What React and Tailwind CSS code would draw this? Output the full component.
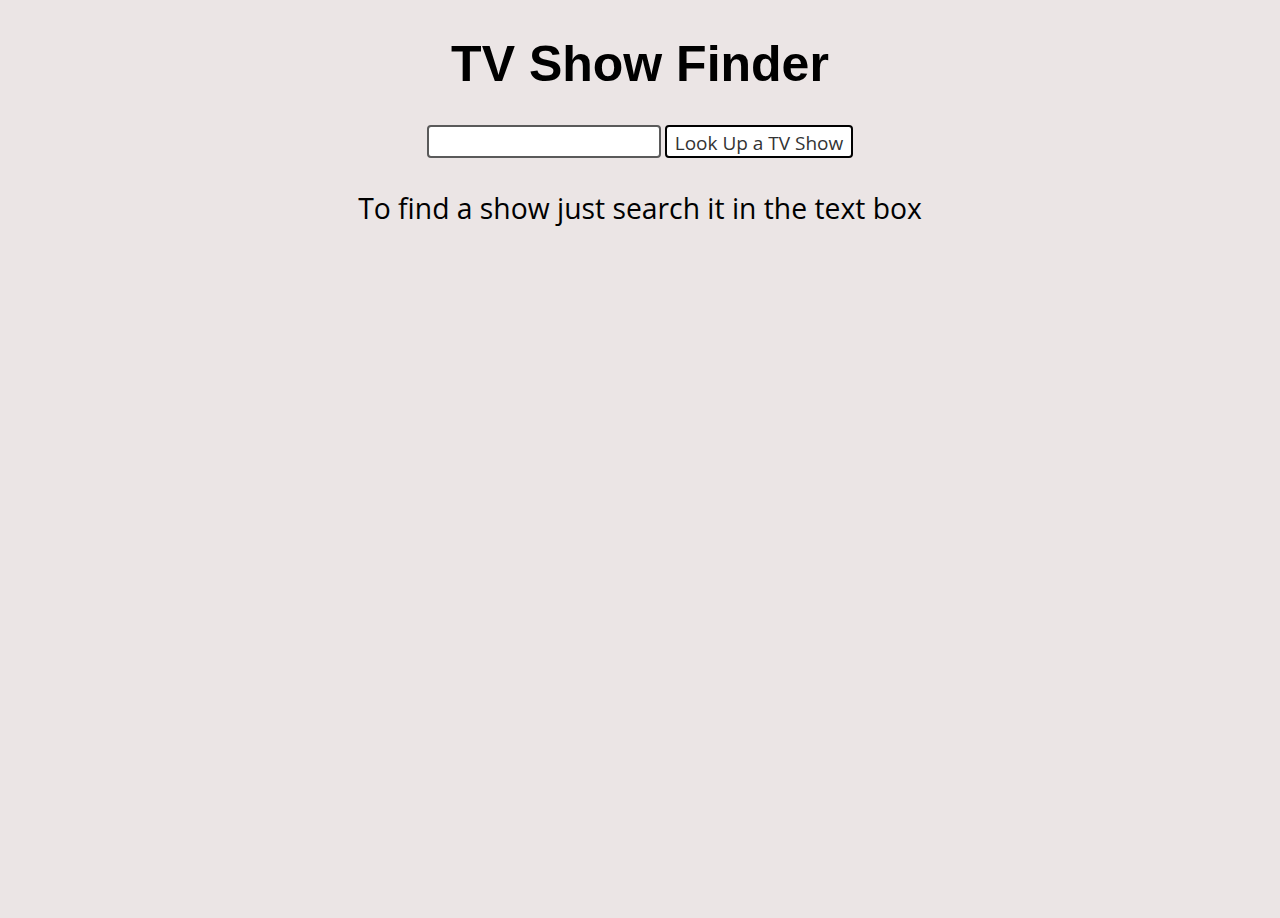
import React, { useState } from 'react';

export default function App() {
  const [query, setQuery] = useState('');

  return (
    <div className="min-h-screen bg-[#ebe5e5] flex flex-col items-center font-['Open_Sans',sans-serif] text-black">
      {/* Title */}
      <h1 className="mt-[35px] text-[50px] leading-[58px] font-bold font-['Liberation_Sans',Arial,sans-serif]">
        TV Show Finder
      </h1>

      {/* Search row */}
      <div className="mt-[32px] flex items-center gap-[4px]">
        <input
          type="text"
          value={query}
          onChange={(e) => setQuery(e.target.value)}
          className="w-[234px] h-[33px] bg-white border-2 border-[#5a5a5a] rounded-[4px] px-1 text-lg"
        />
        <button className="w-[188px] h-[33px] pt-[3px] bg-white border-2 border-black rounded-[4px] text-[19px] leading-none text-[#333]">
          Look Up a TV Show
        </button>
      </div>

      {/* Hint */}
      <p className="mt-[32px] text-[28.3px] leading-[36px]">
        To find a show just search it in the text box
      </p>
    </div>
  );
}
